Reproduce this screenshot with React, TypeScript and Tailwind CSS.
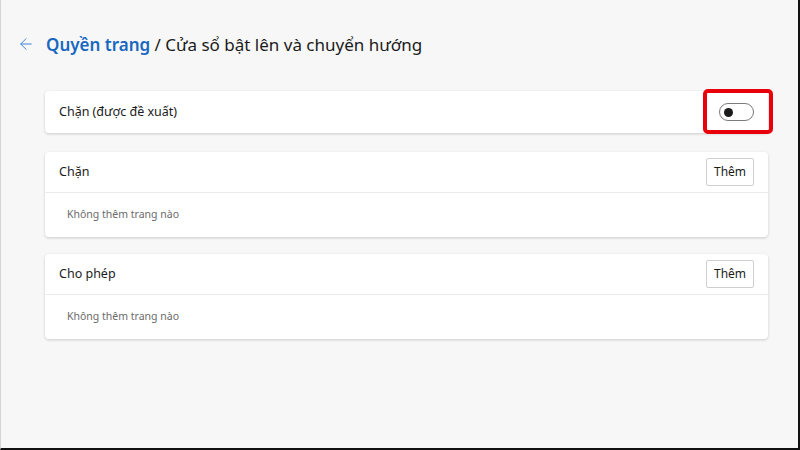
import { ArrowLeft } from 'lucide-react'

type ListCardProps = {
  title: string
}

function ListCard({ title }: ListCardProps) {
  return (
    <div className="bg-white rounded-[4px] shadow-[0_1px_3px_rgba(0,0,0,0.18)]">
      <div className="h-[41px] flex items-center justify-between pl-[14px] pr-[14px] border-b border-[#ececec]">
        <span className="text-[12.5px] text-[#1b1b1b]">{title}</span>
        <button className="h-[28px] w-[48px] border border-[#cfcfcf] bg-white text-[12px] text-[#1b1b1b] rounded-[2px]">
          Thêm
        </button>
      </div>
      <div className="h-[44px] flex items-center pl-[22px]">
        <span className="text-[10.5px] text-[#6b6b6b]">Không thêm trang nào</span>
      </div>
    </div>
  )
}

export default function App() {
  return (
    <div
      className="relative w-[800px] h-[450px] bg-[#f7f7f7] border-l border-l-[#d4d4d4] border-r-2 border-b-2 border-r-[#111] border-b-[#111] overflow-hidden"
      style={{ fontFamily: '"Noto Sans", "Open Sans", sans-serif' }}
    >
      <div className="flex items-center h-[24px] mt-[32px] pl-[16px]">
        <ArrowLeft size={18} strokeWidth={1.3} className="text-[#3b82d6]" />
        <div className="ml-[11px] text-[17px] leading-none">
          <span className="text-[#1867c0] font-semibold">Quyền trang</span>
          <span className="text-[#1b1b1b]"> / Cửa sổ bật lên và chuyển hướng</span>
        </div>
      </div>

      <div className="flex flex-col pl-[44px] pr-[30px] mt-[35px]">
        <div className="h-[42px] bg-white rounded-[4px] shadow-[0_1px_3px_rgba(0,0,0,0.18)] flex items-center justify-between pl-[14px] pr-[14px]">
          <span className="text-[12.5px] text-[#1b1b1b]">Chặn (được đề xuất)</span>
          <div className="w-[35px] h-[18px] rounded-full border border-[#7a7a7a] flex items-center pl-[4px]">
            <div className="w-[9px] h-[9px] rounded-full bg-[#1b1b1b]" />
          </div>
        </div>
        <div className="mt-[19px]">
          <ListCard title="Chặn" />
        </div>
        <div className="mt-[17px]">
          <ListCard title="Cho phép" />
        </div>
      </div>

      <div className="absolute left-[702px] top-[89px] w-[70px] h-[45px] border-[4px] border-[#e8000b] rounded-[5px]" />
    </div>
  )
}
